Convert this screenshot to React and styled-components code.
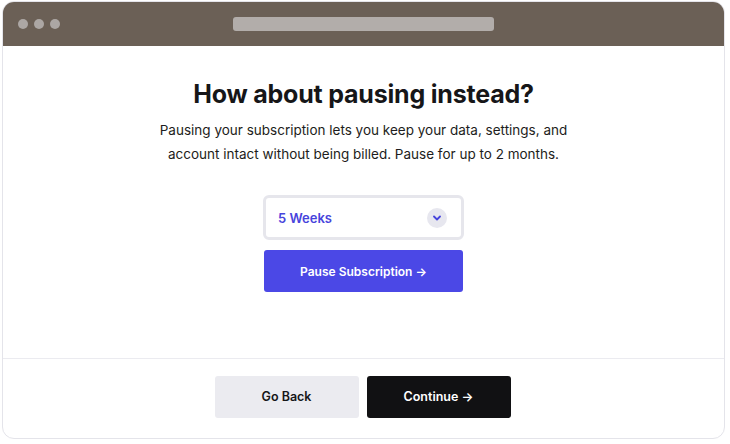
import React, { useState } from "react";
import styled, { createGlobalStyle } from "styled-components";

const GlobalStyle = createGlobalStyle`
  html, body {
    margin: 0;
    padding: 0;
    background: #ffffff;
    font-family: Inter, "Noto Sans", sans-serif;
  }
`;

const Page = styled.div`
  width: 730px;
  height: 444px;
  padding: 1px 5px 6px 2px;
  box-sizing: border-box;
`;

const Window = styled.div`
  height: 436px;
  display: flex;
  flex-direction: column;
  border: 1px solid #e4e4ea;
  border-radius: 12px;
  overflow: hidden;
  background: #ffffff;
`;

const TitleBar = styled.div`
  height: 44px;
  flex-shrink: 0;
  background: #6b6056;
  display: flex;
  align-items: center;
  padding: 0 0 0 15px;
`;

const Dots = styled.div`
  display: flex;
  gap: 6px;
`;

const Dot = styled.span`
  width: 10px;
  height: 10px;
  border-radius: 50%;
  background: #aca7a4;
`;

const AddressBar = styled.div`
  width: 261px;
  height: 14px;
  border-radius: 3px;
  background: #b2adaa;
  margin-left: 173px;
`;

const Main = styled.div`
  flex: 1;
  display: flex;
  flex-direction: column;
  align-items: center;
  padding-top: 33px;
  border-bottom: 1px solid #ebebf0;
`;

const Heading = styled.h1`
  margin: 0;
  font-size: 25px;
  font-weight: 700;
  color: #161618;
  letter-spacing: -0.2px;
`;

const Lead = styled.p`
  margin: 9px 0 0;
  font-size: 13.5px;
  line-height: 24px;
  color: #1d1d20;
  text-align: center;
`;

const SelectBox = styled.div`
  margin-top: 29px;
  width: 201px;
  height: 45px;
  box-sizing: border-box;
  border: 3px solid #e6e6ec;
  border-radius: 6px;
  display: flex;
  align-items: center;
  justify-content: space-between;
  padding: 0 14px 0 12px;
  cursor: pointer;
`;

const SelectLabel = styled.span`
  font-size: 13px;
  font-weight: 600;
  color: #4744dc;
`;

const Chevron = styled.span`
  width: 20px;
  height: 20px;
  border-radius: 50%;
  background: #e7e7ef;
  display: flex;
  align-items: center;
  justify-content: center;
`;

const PrimaryButton = styled.button`
  margin-top: 10px;
  width: 199px;
  height: 42px;
  border: none;
  border-radius: 3px;
  background: #4b48e6;
  color: #ffffff;
  font-family: Inter, sans-serif;
  font-size: 12px;
  font-weight: 600;
  cursor: pointer;
`;

const Footer = styled.div`
  height: 79px;
  flex-shrink: 0;
  display: flex;
  justify-content: center;
  align-items: center;
  gap: 8px;
  padding: 0 2px 4px 0;
  box-sizing: border-box;
`;

const FooterButton = styled.button`
  width: 144px;
  height: 42px;
  border: none;
  border-radius: 3px;
  background: ${(p) => (p.$dark ? "#111113" : "#ebebf0")};
  color: ${(p) => (p.$dark ? "#ffffff" : "#161618")};
  font-family: Inter, sans-serif;
  font-size: 12.5px;
  font-weight: 600;
  cursor: pointer;
`;

export default function App() {
  const [weeks] = useState(5);
  return (
    <Page>
      <GlobalStyle />
      <Window>
        <TitleBar>
          <Dots>
            <Dot />
            <Dot />
            <Dot />
          </Dots>
          <AddressBar />
        </TitleBar>
        <Main>
          <Heading>How about pausing instead?</Heading>
          <Lead>
            Pausing your subscription lets you keep your data, settings, and
            <br />
            account intact without being billed. Pause for up to 2 months.
          </Lead>
          <SelectBox>
            <SelectLabel>{weeks} Weeks</SelectLabel>
            <Chevron>
              <svg width="8" height="6" viewBox="0 0 8 6">
                <path d="M1 1.5 L4 4.5 L7 1.5" fill="none" stroke="#4744dc" strokeWidth="1.8" strokeLinecap="round" strokeLinejoin="round" />
              </svg>
            </Chevron>
          </SelectBox>
          <PrimaryButton>Pause Subscription →</PrimaryButton>
        </Main>
        <Footer>
          <FooterButton>Go Back</FooterButton>
          <FooterButton $dark>Continue →</FooterButton>
        </Footer>
      </Window>
    </Page>
  );
}
